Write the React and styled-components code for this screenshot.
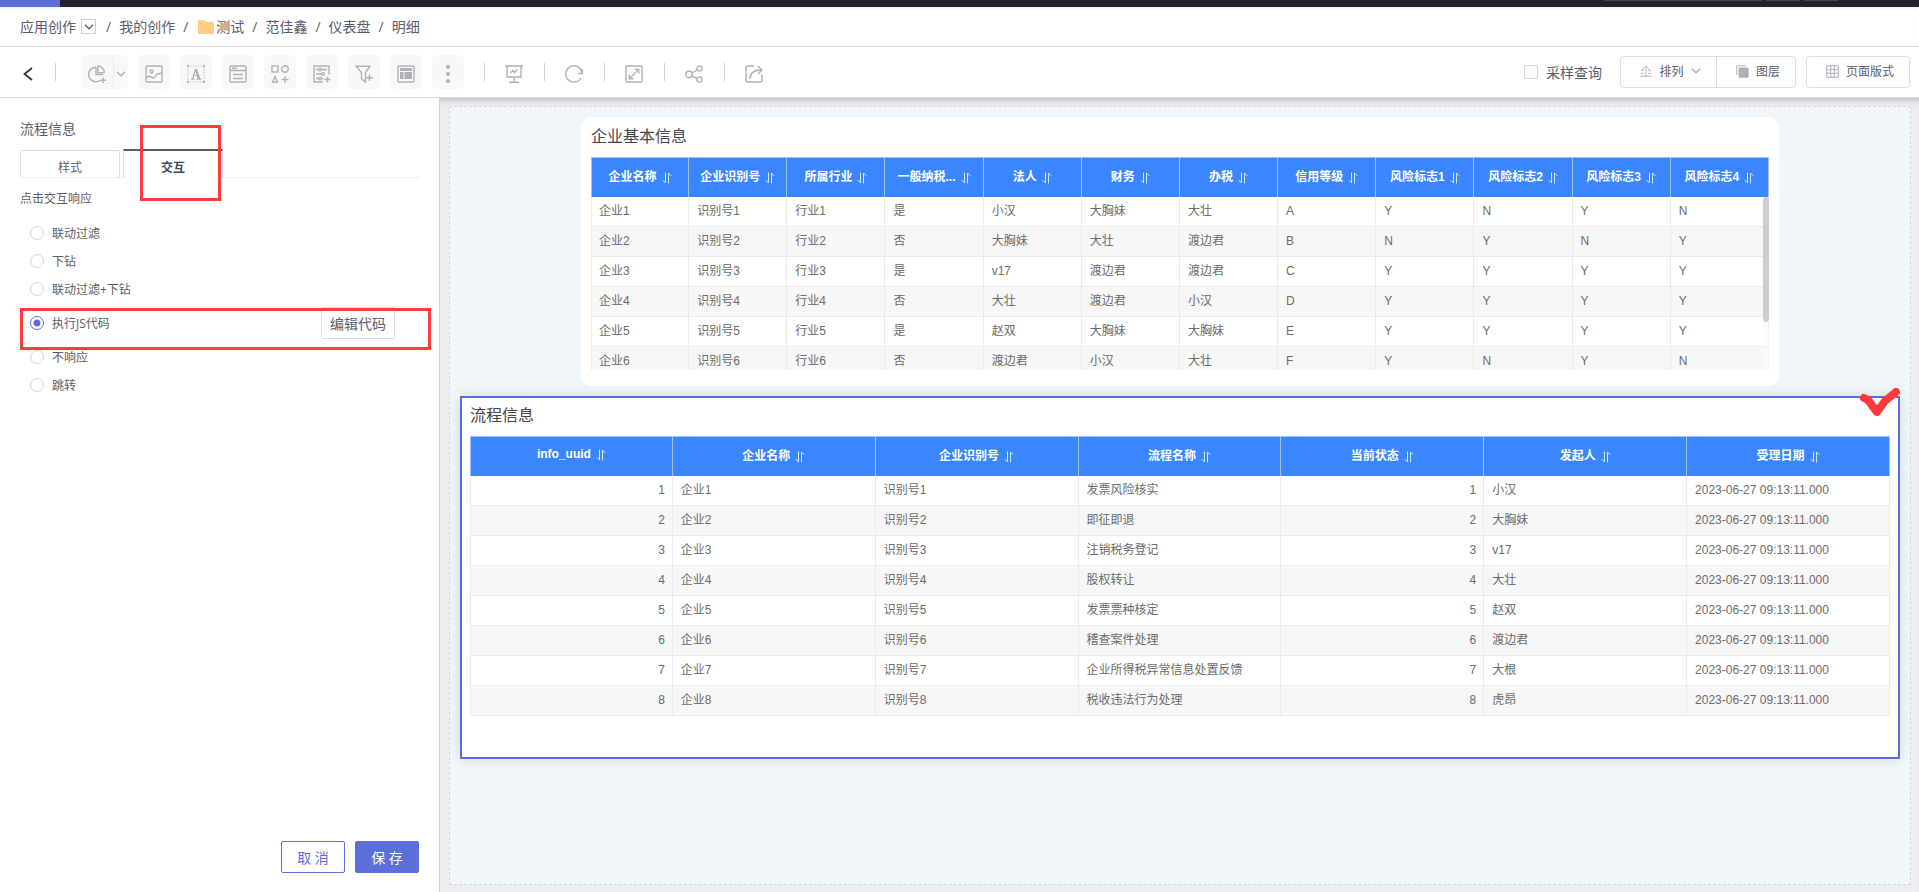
import { useState } from "react";
import styled, { createGlobalStyle, css } from "styled-components";

const GlobalStyle = createGlobalStyle`
  * { box-sizing: border-box; }
  body {
    margin: 0;
    background: #fff;
    color: #5a5d6b;
    font-family: "Open Sans", "Noto Sans CJK SC", sans-serif;
    font-size: 14px;
  }
  button, input { font: inherit; color: inherit; }
`;

const RED = "#fd3b3b";
const PURPLE = "#5b6fd8";

/* PAGE */
const Page = styled.div`
  display: flex;
  flex-direction: column;
  min-height: 100vh;
`;

/* DARK STRIP AT THE TOP */
const TopStrip = styled.div`
  display: flex;
  justify-content: flex-end;
  gap: 4px;
  height: 7px;
  padding-right: 81px;
  background: linear-gradient(to right, ${PURPLE} 60px, #21212b 60px);
`;

const StripItem = styled.span`
  width: ${(p) => p.$width}px;
  height: 1px;
  background: #43484b;
`;

/* BREADCRUMB */
const Breadcrumb = styled.nav`
  display: flex;
  align-items: center;
  height: 40px;
  padding: 0 20px;
  border-bottom: 1px solid #d9d9dc;
  box-shadow: inset 0 4px 4px -3px rgba(0, 0, 0, 0.08);
`;

const Crumb = styled.a`
  display: flex;
  align-items: center;
  gap: 2px;
  color: inherit;
  line-height: 20px;
  text-decoration: none;

  svg { margin-left: 2px; }
`;

const Slash = styled.span`
  margin: 0 8px;
`;

const CrumbToggle = styled.button`
  display: flex;
  align-items: center;
  justify-content: center;
  width: 15px;
  height: 15px;
  margin: 0 2px 0 5px;
  padding: 0;
  border: 1px solid #cfcfd3;
  background: #fff;
`;

/* TOOLBAR */
const Toolbar = styled.header`
  display: flex;
  align-items: center;
  justify-content: space-between;
  height: 51px;
  padding: 0 9px 0 20px;
  border-bottom: 1px solid #d9d9dc;
`;

const ToolGroup = styled.div`
  display: flex;
  align-items: center;
  gap: ${(p) => p.$gap || 10}px;
`;

const Separator = styled.span`
  width: 1px;
  height: 18px;
  background: #d4d4d8;
`;

const ToolButton = styled.button`
  display: flex;
  align-items: center;
  justify-content: center;
  width: ${(p) => p.$width || 32}px;
  height: 34px;
  padding: 3px 0 0;
  border: none;
  border-radius: 5px;
  background: #f8f8f9;
  color: #b0b1b7;
  cursor: pointer;
`;

const PlainButton = styled(ToolButton)`
  justify-content: flex-start;
  background: none;
`;

const BackButton = styled(PlainButton)`
  padding-left: 3px;
  color: #303133;
`;

const SplitButton = styled.div`
  display: flex;
  margin-left: 15px;

  ${ToolButton}:first-child {
    border-radius: 5px 0 0 5px;
    border-right: 1px solid #ececee;
  }

  ${ToolButton}:last-child {
    border-radius: 0 5px 5px 0;
  }
`;

const SampleLabel = styled.label`
  display: flex;
  align-items: center;
  gap: 8px;
  margin-right: 8px;
`;

const CheckBox = styled.input`
  appearance: none;
  width: 14px;
  height: 14px;
  margin: 0;
  border: 1px solid #d4d4d8;
  border-radius: 2px;
  background: #fff;
`;

const ButtonGroup = styled.div`
  display: flex;

  & > button:first-child {
    border-radius: 4px 0 0 4px;
  }

  & > button + button {
    margin-left: -1px;
    border-radius: 0 4px 4px 0;
  }
`;

const OutlineButton = styled.button`
  display: flex;
  align-items: center;
  justify-content: center;
  gap: 7px;
  width: ${(p) => p.$width}px;
  height: 32px;
  padding: 0 0 2px 4px;
  border: 1px solid #dcdce0;
  border-radius: 4px;
  background: #fff;
  font-size: 12px;
  cursor: pointer;

  svg { color: #b0b1b7; }
`;

/* BODY */
const Body = styled.div`
  display: flex;
  flex: 1;
`;

/* SIDE PANEL */
const Panel = styled.aside`
  display: flex;
  flex-direction: column;
  width: 440px;
  flex-shrink: 0;
  padding: 21px 20px 19px;
  border-right: 1px solid #d3d3da;
`;

const PanelTitle = styled.h2`
  margin: 0;
  font-size: 14px;
  font-weight: 400;
  line-height: 20px;
`;

const Tabs = styled.div`
  display: flex;
  gap: 3px;
  margin-top: 10px;
  border-bottom: 1px solid #eee;
`;

const Tab = styled.button`
  width: 100px;
  height: 27px;
  margin-top: 1px;
  padding: 5px 0 0;
  border: 1px solid #dcdce0;
  border-bottom: none;
  border-radius: 2px 2px 0 0;
  background: #fff;
  font-size: 12px;
  cursor: pointer;

  ${(p) =>
    p.$active &&
    css`
      height: 29px;
      margin: 0 0 -1px;
      border-top: 2px solid #5a5d6b;
      border-radius: 0;
      color: #45485a;
      font-weight: 700;
    `}
`;

const TabWrap = styled.div`
  position: relative;
`;

/* red outlines drawn over the controls */
const TabMark = styled.span`
  position: absolute;
  top: -24px;
  left: 17px;
  width: 81px;
  height: 76px;
  border: 3px solid ${RED};
  pointer-events: none;
`;

const RowMark = styled.span`
  position: absolute;
  top: 5px;
  left: 0;
  right: -12px;
  height: 42px;
  border: 3px solid ${RED};
  pointer-events: none;
`;

const RadioGroup = styled.fieldset`
  margin: 11px 0 0;
  padding: 0;
  border: none;
  font-size: 12px;
`;

const Legend = styled.legend`
  padding: 0;
  margin-bottom: 10px;
  line-height: 20px;
`;

const RadioRow = styled.div`
  position: relative;
  display: flex;
  align-items: center;
  justify-content: space-between;
  height: ${(p) => (p.$tall ? 40 : 28)}px;
  padding: 0 24px 0 10px;
`;

const RadioLabel = styled.label`
  display: flex;
  align-items: center;
  gap: 8px;
`;

const Radio = styled.input`
  appearance: none;
  width: 14px;
  height: 14px;
  margin: 0;
  border: 1px solid #d4d4d8;
  border-radius: 50%;
  background: #fff;

  &:checked {
    border-color: ${PURPLE};
    background: radial-gradient(circle, ${PURPLE} 3px, #fff 4px);
  }
`;

const EditButton = styled.button`
  width: 74px;
  height: 32px;
  padding: 0;
  border: 1px solid #dcdce0;
  border-radius: 2px;
  background: #fff;
  font-size: 14px;
  cursor: pointer;
`;

const Actions = styled.div`
  display: flex;
  justify-content: flex-end;
  gap: 10px;
  margin-top: auto;
`;

const ActionButton = styled.button`
  width: 64px;
  height: 32px;
  padding: 0;
  border: 1px solid ${PURPLE};
  border-radius: 2px;
  background: ${(p) => (p.$primary ? PURPLE : "#fff")};
  color: ${(p) => (p.$primary ? "#fff" : PURPLE)};
  font-size: 14px;
  cursor: pointer;
`;

/* WORKSPACE */
const Workspace = styled.main`
  display: flex;
  flex: 1;
  min-width: 0;
  padding: 8px 8px 7px 9px;
  background: #ededf2;
  box-shadow: inset 0 7px 6px -5px rgba(0, 0, 0, 0.22);
`;

const Canvas = styled.div`
  display: flex;
  flex-direction: column;
  gap: 10px;
  flex: 1;
  min-width: 0;
  padding: 10px;
  border: 1px dashed #d6d8dd;
  background: #f0f6fa;
`;

const Card = styled.section`
  position: relative;
  padding: ${(p) => (p.$selected ? "7px 8px 41px" : "9px 10px 16px")};
  margin: ${(p) => (p.$selected ? "0" : "0 121px")};
  border: ${(p) => (p.$selected ? `2px solid ${PURPLE}` : "none")};
  border-radius: ${(p) => (p.$selected ? 0 : 10)}px;
  background: #fff;
  box-shadow: ${(p) => (p.$selected ? "0 0 12px rgba(0, 0, 0, 0.12)" : "none")};
`;

const CardTitle = styled.h3`
  margin: 0 0 11px;
  color: #45464b;
  font-size: 16px;
  font-weight: 400;
  line-height: 20px;
`;

const TableBox = styled.div`
  position: relative;
  max-height: ${(p) => (p.$clip ? "213px" : "none")};
  overflow: hidden;
`;

const ScrollTrack = styled.span`
  position: absolute;
  top: 40px;
  right: 0;
  bottom: 0;
  width: 6px;
  background: rgba(250, 250, 250, 0.6);

  &::before {
    content: "";
    display: block;
    height: 125px;
    border-radius: 3px;
    background: #cdcdcd;
  }
`;

const Table = styled.table`
  width: 100%;
  table-layout: fixed;
  border-collapse: separate;
  border-spacing: 0;
  font-family: "Liberation Sans", "Noto Sans CJK SC", sans-serif;
  font-size: 12px;
`;

const Th = styled.th`
  height: 40px;
  padding: 0 0 5px;
  border-top: 1px solid #9cc2ff;
  border-right: 1px solid #9cc2ff;
  background: #3a86ff;
  color: #fff;
  white-space: nowrap;

  &:first-child { border-left: 1px solid #9cc2ff; }

  svg {
    margin-left: 5px;
    vertical-align: -3px;
  }
`;

const Td = styled.td`
  height: 30px;
  padding: 0 7px 1px 8px;
  border-right: 1px solid #ebebeb;
  border-bottom: 1px solid #ebebeb;
  color: #6b6b6b;
  line-height: 18px;
  text-align: ${(p) => (p.$right ? "right" : "left")};
  white-space: nowrap;

  &:first-child {
    padding-left: 7px;
    border-left: 1px solid #ebebeb;
  }
  tr:nth-child(even) > & { background: #f7f7f7; }
`;

const CheckMark = styled.svg`
  position: absolute;
  top: -10px;
  right: -2px;
`;

/* ICONS */
const Icon = ({ size = 18, children }) => (
  <svg
    width={size}
    height={size}
    viewBox="0 0 18 18"
    fill="none"
    stroke="currentColor"
    strokeWidth="1.4"
    aria-hidden="true"
  >
    {children}
  </svg>
);

const Chevron = () => (
  <svg width="10" height="6" viewBox="0 0 10 6" fill="none" stroke="currentColor" strokeWidth="1.3" aria-hidden="true">
    <path d="M1 .8 5 4.8 9 .8" />
  </svg>
);

const SortIcon = () => (
  <svg width="10" height="12" viewBox="0 0 10 12" fill="none" stroke="#d5e5ff" aria-hidden="true">
    <path d="M3.5 .5v10.5L.8 8.2M6.5 11.5V1l2.7 2.8" />
  </svg>
);

const PieIcon = () => (
  <Icon>
    <path d="M8 2.2a7.3 7.3 0 1 0 4.5 13M15.3 9.5H8V2.2M9.8 .9v6.7h6.500A6.600 6.600 0 0 0 9.800 .9ZM15.300 12.500v5.500M12.500 15.300h5.500" />
  </Icon>
);

const tools = [
  {
    name: "图片",
    icon: (
      <Icon>
        <rect x="1" y="1" width="16" height="16" rx="1" />
        <circle cx="6.5" cy="6.5" r="1.5" />
        <path d="M1 13q2-2.500 4-1.500l3 1.500q1.500 0 3-2.500 2-3 3.500-1.500L17 7.500" />
      </Icon>
    ),
  },
  {
    name: "文本",
    icon: (
      <Icon>
        <rect x="1" y="1" width="16" height="16" strokeDasharray="1 1.5" strokeWidth="1" />
        <path d="M0 1h2M16 1h2M0 17h2M16 17h2" strokeWidth="2" />
        <path d="m5.5 14 3.200-10M6.700 10.500h4M4 14.200h3.500M9.500 14.200h5" strokeWidth="1.2" />
        <path d="m8.800 4 3.400 10" strokeWidth="2.4" />
      </Icon>
    ),
  },
  {
    name: "容器",
    icon: (
      <Icon>
        <rect x="1" y="1" width="16" height="16" rx="1" />
        <path d="M1 5.500h16M4 9.500h10M4 13.500h10M3 3.200h5" />
      </Icon>
    ),
  },
  {
    name: "图形",
    icon: (
      <Icon>
        <rect x="1" y="1" width="6" height="6" />
        <circle cx="14" cy="4" r="3.200" />
        <path d="m4 11.500 2.500 5.500h-5ZM14 11v7M10.500 14.500h7" />
      </Icon>
    ),
  },
  {
    name: "查询控件",
    icon: (
      <Icon>
        <path d="M16 9.500V1H1v16h9M3 4.500h2.500M8.500 4.500H14M3 9h5.500M3 13.500h2.500M8.500 13.500h2M14.500 11.500v6M11.500 14.500h6" />
        <circle cx="7" cy="4.500" r="1.400" />
        <circle cx="10" cy="9" r="1.400" />
        <circle cx="7" cy="13.500" r="1.400" />
      </Icon>
    ),
  },
  {
    name: "过滤",
    icon: (
      <Icon>
        <path d="M1 1.200h14L10.500 7.500V17L6.500 14V7.500ZM14.500 9.500v6.500M11.500 12.700h6.500" />
      </Icon>
    ),
  },
  {
    name: "模板",
    icon: (
      <Icon>
        <rect x="1" y="1" width="16" height="16" rx="1" />
        <path d="M3 3h12v3H3ZM3 7h3.500v7H3ZM7.500 7H15v7H7.500Z" fill="currentColor" stroke="none" />
      </Icon>
    ),
  },
  {
    name: "更多",
    icon: (
      <Icon>
        <g fill="currentColor" stroke="none">
          <circle cx="9" cy="2" r="2" />
          <circle cx="9" cy="9" r="2" />
          <circle cx="9" cy="16" r="2" />
        </g>
      </Icon>
    ),
  },
];

const viewTools = [
  {
    name: "预览",
    icon: (
      <Icon>
        <path d="M0 1h18M2 1v11h14V1M9 12v5M4 17.200h10M5.500 8 8 5.500l1.500 2 3-3" />
      </Icon>
    ),
  },
  {
    name: "刷新",
    icon: (
      <Icon>
        <path d="M16 13A8.200 8.200 0 1 1 17 7.500M17.300 4v4.500h-4" />
      </Icon>
    ),
  },
  {
    name: "全屏",
    icon: (
      <Icon>
        <rect x="1" y="1" width="16" height="16" rx="1" />
        <path d="m4.500 13.500 9-9M9.500 4.300h4.200v4.200M4.300 9.500v4.200h4.200" />
      </Icon>
    ),
  },
  {
    name: "分享",
    icon: (
      <Icon>
        <circle cx="4" cy="9.500" r="3.200" />
        <circle cx="14.500" cy="3.500" r="2.600" />
        <circle cx="14.500" cy="14.500" r="2.600" />
        <path d="m7 8 5.200-3M7 11l5.200 2.500" />
      </Icon>
    ),
  },
  {
    name: "导出",
    icon: (
      <Icon>
        <path d="M9 1H3Q1 1 1 3v12q0 2 2 2h12q2 0 2-2V9.500M5 14c0-6 3-9 11.500-9M13 1l4 4-4 4" />
      </Icon>
    ),
  },
];

/* DATA */
const companyColumns = [
  "企业名称", "企业识别号", "所属行业", "一般纳税...", "法人", "财务",
  "办税", "信用等级", "风险标志1", "风险标志2", "风险标志3", "风险标志4",
];

const companyRows = [
  ["企业1", "识别号1", "行业1", "是", "小汉", "大胸妹", "大壮", "A", "Y", "N", "Y", "N"],
  ["企业2", "识别号2", "行业2", "否", "大胸妹", "大壮", "渡边君", "B", "N", "Y", "N", "Y"],
  ["企业3", "识别号3", "行业3", "是", "v17", "渡边君", "渡边君", "C", "Y", "Y", "Y", "Y"],
  ["企业4", "识别号4", "行业4", "否", "大壮", "渡边君", "小汉", "D", "Y", "Y", "Y", "Y"],
  ["企业5", "识别号5", "行业5", "是", "赵双", "大胸妹", "大胸妹", "E", "Y", "Y", "Y", "Y"],
  ["企业6", "识别号6", "行业6", "否", "渡边君", "小汉", "大壮", "F", "Y", "N", "Y", "N"],
];

const flowColumns = ["info_uuid", "企业名称", "企业识别号", "流程名称", "当前状态", "发起人", "受理日期"];

const flowRows = [
  ["发票风险核实", "小汉"],
  ["即征即退", "大胸妹"],
  ["注销税务登记", "v17"],
  ["股权转让", "大壮"],
  ["发票票种核定", "赵双"],
  ["稽查案件处理", "渡边君"],
  ["企业所得税异常信息处置反馈", "大根"],
  ["税收违法行为处理", "虎昂"],
].map(([flow, person], i) => {
  const n = i + 1;
  return [n, `企业${n}`, `识别号${n}`, flow, n, person, "2023-06-27 09:13:11.000"];
});

const responses = ["联动过滤", "下钻", "联动过滤+下钻", "执行JS代码", "不响应", "跳转"];

const DataTable = ({ columns, rows }) => (
  <Table>
    <thead>
      <tr>
        {columns.map((name) => (
          <Th key={name} scope="col">
            {name}
            <SortIcon />
          </Th>
        ))}
      </tr>
    </thead>
    <tbody>
      {rows.map((row, i) => (
        <tr key={i}>
          {row.map((cell, j) => (
            <Td key={j} $right={typeof cell === "number"}>{cell}</Td>
          ))}
        </tr>
      ))}
    </tbody>
  </Table>
);

const SidePanel = () => {
  const [response, setResponse] = useState("执行JS代码");

  return (
    <Panel>
      <PanelTitle>流程信息</PanelTitle>
      <Tabs role="tablist">
        <Tab role="tab" aria-selected="false">样式</Tab>
        <TabWrap>
          <Tab role="tab" aria-selected="true" $active>交互</Tab>
          <TabMark />
        </TabWrap>
      </Tabs>
      <RadioGroup>
        <Legend>点击交互响应</Legend>
        {responses.map((name) => {
          const code = name === "执行JS代码";
          return (
            <RadioRow key={name} $tall={code}>
              <RadioLabel>
                <Radio
                  type="radio"
                  name="response"
                  checked={response === name}
                  onChange={() => setResponse(name)}
                />
                {name}
              </RadioLabel>
              {code && <EditButton type="button">编辑代码</EditButton>}
              {code && <RowMark />}
            </RadioRow>
          );
        })}
      </RadioGroup>
      <Actions>
        <ActionButton type="button">取 消</ActionButton>
        <ActionButton type="button" $primary>保 存</ActionButton>
      </Actions>
    </Panel>
  );
};

export default function App() {
  return (
    <Page>
      <GlobalStyle />
      <TopStrip>
        <StripItem $width={158} />
        <StripItem $width={34} />
        <StripItem $width={34} />
      </TopStrip>

      <Breadcrumb>
        <Crumb href="#">应用创作</Crumb>
        <CrumbToggle aria-label="展开">
          <Chevron />
        </CrumbToggle>
        <Slash>/</Slash>
        <Crumb href="#">我的创作</Crumb>
        <Slash>/</Slash>
        <Crumb href="#">
          <svg width="16" height="14" viewBox="0 0 16 14" aria-hidden="true">
            <path d="M1 0h5l2 2h7q1 0 1 1v10q0 1-1 1H1q-1 0-1-1V1q0-1 1-1Z" fill="#ffcd85" />
          </svg>
          测试
        </Crumb>
        <Slash>/</Slash>
        <Crumb href="#">范佳鑫</Crumb>
        <Slash>/</Slash>
        <Crumb href="#">仪表盘</Crumb>
        <Slash>/</Slash>
        <Crumb href="#">明细</Crumb>
      </Breadcrumb>

      <Toolbar>
        <ToolGroup $gap={20}>
          <ToolGroup>
            <BackButton $width={25} aria-label="返回">
              <svg width="10" height="14" viewBox="0 0 10 14" fill="none" stroke="currentColor" strokeWidth="1.7">
                <path d="M9 1 1.500 7 9 13" />
              </svg>
            </BackButton>
            <Separator />
            <SplitButton>
              <ToolButton $width={33} aria-label="图表">
                <PieIcon />
              </ToolButton>
              <ToolButton $width={14} aria-label="选择图表">
                <Chevron />
              </ToolButton>
            </SplitButton>
            {tools.map((tool) => (
              <ToolButton key={tool.name} aria-label={tool.name}>{tool.icon}</ToolButton>
            ))}
          </ToolGroup>
          {viewTools.map((tool) => (
            <ToolGroup key={tool.name} $gap={20}>
              <Separator />
              <PlainButton $width={19} aria-label={tool.name}>{tool.icon}</PlainButton>
            </ToolGroup>
          ))}
        </ToolGroup>

        <ToolGroup>
          <SampleLabel>
            <CheckBox type="checkbox" />
            采样查询
          </SampleLabel>
          <ButtonGroup>
            <OutlineButton $width={97}>
              <Icon size={12}>
                <path d="M9 17V2M2 8.500 9 1.500l7 7H12M2 8.500h4M1 12.500h5M12 12.500h5M0 16.800h18" />
              </Icon>
              排列
              <Chevron />
            </OutlineButton>
            <OutlineButton $width={80}>
              <Icon size={13}>
                <path d="M14 1H3Q1 1 1 3v11" />
                <rect x="3.500" y="3.500" width="14" height="14" rx="2" fill="currentColor" stroke="none" />
              </Icon>
              图层
            </OutlineButton>
          </ButtonGroup>
          <OutlineButton $width={104}>
            <Icon size={13}>
              <rect x="1" y="1" width="16" height="16" rx="1" />
              <path d="M6.500 1v16M11.500 1v16M1 6.500h16M1 11.500h16" />
            </Icon>
            页面版式
          </OutlineButton>
        </ToolGroup>
      </Toolbar>

      <Body>
        <SidePanel />
        <Workspace>
          <Canvas>
            <Card>
              <CardTitle>企业基本信息</CardTitle>
              <TableBox $clip>
                <DataTable columns={companyColumns} rows={companyRows} />
                <ScrollTrack />
              </TableBox>
            </Card>
            <Card $selected>
              <CardTitle>流程信息</CardTitle>
              <TableBox>
                <DataTable columns={flowColumns} rows={flowRows} />
              </TableBox>
              <CheckMark width="43" height="32" viewBox="0 0 43 32" fill="none" stroke={RED} strokeLinecap="round" strokeLinejoin="round" aria-hidden="true">
                <path d="M7 10 11 12 20 24 28 13 39 4" strokeWidth="8" />
              </CheckMark>
            </Card>
          </Canvas>
        </Workspace>
      </Body>
    </Page>
  );
}
